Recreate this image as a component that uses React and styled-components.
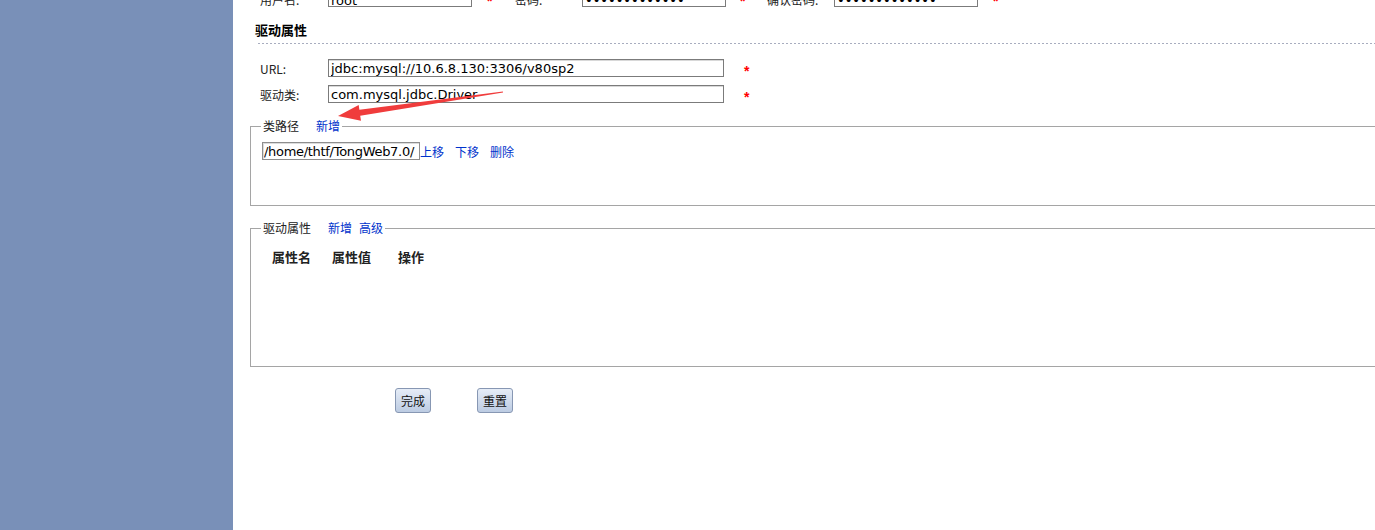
import React from 'react';
import styled, {createGlobalStyle} from 'styled-components';

const GlobalStyle = createGlobalStyle`
  html, body {
    margin: 0;
    padding: 0;
    overflow: hidden;
    background: #fff;
  }
  body {
    font-family: "Noto Sans CJK SC", "Noto Sans", sans-serif;
    font-size: 12px;
    color: #000;
  }
`;

const App = () => {
    return (
        <Page>
            <GlobalStyle/>
            <Sidebar/>
            <Main>
                <FormRow gap={-11}>
                    <Label w={68} shift={2}>用户名:</Label>
                    <TextInput w={144} shift={5} defaultValue="root" readOnly/>
                    <Star w={43} pl={15}>*</Star>
                    <Label w={67} shift={2}>密码:</Label>
                    <TextInput w={144} shift={5} type="password" defaultValue="thtfthtfthtf1" readOnly/>
                    <Star w={41} pl={14}>*</Star>
                    <Label w={67} shift={2}>确认密码:</Label>
                    <TextInput w={144} shift={5} type="password" defaultValue="thtfthtfthtf1" readOnly/>
                    <Star w={40} pl={15}>*</Star>
                </FormRow>

                <SectionTitle>驱动属性</SectionTitle>
                <DottedRule/>

                <FormRow gap={15}>
                    <Label w={68}>URL:</Label>
                    <TextInput w={396} defaultValue="jdbc:mysql://10.6.8.130:3306/v80sp2" readOnly/>
                    <Star w={40} pl={20}>*</Star>
                </FormRow>
                <FormRow gap={8}>
                    <Label w={68}>驱动类:</Label>
                    <TextInput w={396} defaultValue="com.mysql.jdbc.Driver" readOnly/>
                    <Star w={40} pl={20}>*</Star>
                </FormRow>

                <Group gap={15} pb={45}>
                    <Legend>
                        类路径<LegendLink ml={17}>新增</LegendLink>
                    </Legend>
                    <PathRow>
                        <PathInput defaultValue="/home/thtf/TongWeb7.0/" readOnly/>
                        <ActionLink>上移</ActionLink>
                        <ActionLink>下移</ActionLink>
                        <ActionLink>删除</ActionLink>
                    </PathRow>
                </Group>

                <Group gap={14} pb={101}>
                    <Legend>
                        驱动属性<LegendLink ml={17}>新增</LegendLink><LegendLink ml={7}>高级</LegendLink>
                    </Legend>
                    <PropHeader>
                        <span>属性名</span>
                        <span>属性值</span>
                        <span>操作</span>
                    </PropHeader>
                </Group>

                <ButtonBar>
                    <Button>完成</Button>
                    <Button>重置</Button>
                </ButtonBar>
            </Main>

            <Annotation viewBox="0 0 1375 530">
                <polygon
                    fill="#f03c3c"
                    points="338,116 358.7,104.9 359.4,109.8 502.9,91.5 503.1,92.5 360.2,115.8 361,120.7"
                />
            </Annotation>
        </Page>
    )
}

const Page = styled.div`
  position: relative;
  display: flex;
  height: 530px;
  overflow: hidden;
`;

const Sidebar = styled.div`
  flex: none;
  width: 233px;
  background: #7990b8;
`;

const Main = styled.div`
  flex: 1;
  min-width: 0;
  display: flex;
  flex-direction: column;
  padding-left: 17px;
`;

const FormRow = styled.div`
  display: flex;
  align-items: center;
  height: 18px;
  margin-top: ${props => props.gap}px;
  padding-left: 10px;
`;

const Label = styled.div`
  flex: none;
  width: ${props => props.w}px;
  padding-top: ${props => props.shift || 0}px;
  font-size: 12px;
  color: #222;
  white-space: nowrap;
`;

const TextInput = styled.input`
  flex: none;
  box-sizing: border-box;
  width: ${props => props.w}px;
  height: 18px;
  margin: 0;
  padding: ${props => props.shift || 0}px 2px 0;
  border: 1px solid #7b7b7b;
  box-shadow: inset 0 1px 0 #d8d8d8;
  font-family: "DejaVu Sans", sans-serif;
  font-size: 13px;
  color: #000;
  background: #fff;
  outline: none;
`;

const Star = styled.div`
  flex: none;
  box-sizing: border-box;
  width: ${props => props.w}px;
  padding-left: ${props => props.pl}px;
  padding-top: 5px;
  color: #ff0000;
  font-family: "Liberation Sans", sans-serif;
  font-size: 14px;
  font-weight: bold;
  line-height: 14px;
`;

const SectionTitle = styled.div`
  margin-top: 15px;
  padding-left: 5px;
  font-size: 13px;
  font-weight: bold;
  line-height: 16px;
`;

const DottedRule = styled.div`
  height: 1px;
  margin-top: 5px;
  margin-left: 8px;
  background: repeating-linear-gradient(to right, #a8adbf 0 2px, transparent 2px 4px);
`;

const Group = styled.fieldset`
  margin: ${props => props.gap}px -30px 0 0;
  padding: 0 0 ${props => props.pb}px 10px;
  border: 1px solid #a5a5a5;
  min-width: 0;
`;

const Legend = styled.legend`
  padding: 0 2px;
  font-size: 12px;
  line-height: 16px;
  color: #222;
`;

const LegendLink = styled.a`
  margin-left: ${props => props.ml}px;
  color: #0033cc;
  cursor: pointer;
`;

const PathRow = styled.div`
  display: flex;
  align-items: center;
  margin-top: 8px;
  margin-left: 1px;
`;

const PathInput = styled.input`
  box-sizing: border-box;
  width: 158px;
  height: 18px;
  margin: 0;
  padding: 0 1px;
  border: 1px solid #8e8e8e;
  box-shadow: inset 1px 1px 0 #dcdcdc;
  font-family: "DejaVu Sans", sans-serif;
  font-size: 13px;
  letter-spacing: -0.3px;
  color: #000;
  background: #fff;
  outline: none;
`;

const ActionLink = styled.a`
  margin-right: 11px;
  font-size: 12px;
  color: #0033cc;
  cursor: pointer;
`;

const PropHeader = styled.div`
  display: grid;
  grid-template-columns: 60px 66px auto;
  margin-top: 13px;
  padding-left: 11px;
  font-size: 13px;
  font-weight: bold;
  line-height: 16px;
  color: #222;
`;

const ButtonBar = styled.div`
  display: flex;
  gap: 46px;
  margin-top: 21px;
  padding-left: 145px;
`;

const Button = styled.button`
  box-sizing: border-box;
  width: 36px;
  height: 25px;
  padding: 0;
  border: 1px solid #8797b3;
  border-radius: 3px;
  background: linear-gradient(to bottom, #e6edf7, #bccbe2);
  font-family: "Noto Sans CJK SC", sans-serif;
  font-size: 12px;
  color: #111;
  cursor: pointer;
`;

const Annotation = styled.svg`
  position: absolute;
  left: 0;
  top: 0;
  width: 1375px;
  height: 530px;
  pointer-events: none;
`;

export default App;
